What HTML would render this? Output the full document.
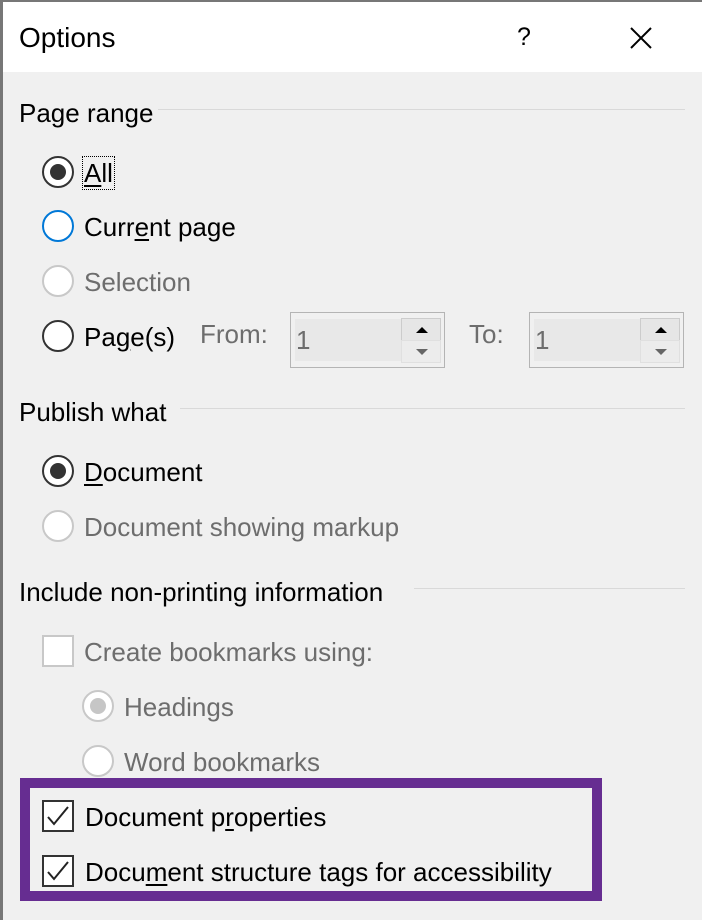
<!DOCTYPE html>
<html><head><style>
*{margin:0;padding:0;box-sizing:border-box}
body{width:702px;height:920px;background:#f0f0f0;font-family:"Liberation Sans",sans-serif;position:relative;overflow:hidden;color:#000}
.t{position:absolute;font-size:26px;line-height:30px;white-space:nowrap;transform-origin:left center}
.g{color:#6d6d6d}
.r{position:absolute;width:32px;height:32px;border-radius:50%;border:2px solid #333;background:#fff}
.rd{border-color:#c8c8c8}
.cb{position:absolute;width:32px;height:32px;border:2px solid #333;background:#fff}
.line{position:absolute;height:1px;background:#d9d9d9}
.spin{position:absolute;width:155px;height:56px;border:1px solid #b4b4b4;background:#f0f0f0}
.spin .in{position:absolute;left:4px;top:6px;width:106px;height:42px;background:#e8e8e8}
.spin .up,.spin .dn{position:absolute;left:110px;width:40px;height:23px;border:1px solid #ccc;background:#e6e6e6}
.spin .up{top:5px}.spin .dn{top:27px;background:#ececec;border-color:#e0e0e0}
u{text-decoration:underline;text-underline-offset:3px}
</style></head><body>
<div style="position:absolute;left:0;top:0;width:702px;height:72px;background:#fff"></div>
<div style="position:absolute;left:0;top:0;width:3px;height:920px;background:#777"></div>
<div style="position:absolute;left:0;top:0;width:702px;height:2px;background:#777"></div>
<div class="t" style="left:19px;top:23px;font-size:28px">Options</div>
<div class="t" style="left:517px;top:22px;font-size:25px">?</div>
<svg style="position:absolute;left:630px;top:27px" width="22" height="22"><path d="M1 1L21 21M21 1L1 21" stroke="#000" stroke-width="2"/></svg>

<div class="t" style="left:19px;top:98px">Page range</div>
<div class="line" style="left:158px;top:109px;width:527px"></div>
<div class="r" style="left:42px;top:156px"><div style="position:absolute;left:6px;top:6px;width:16px;height:16px;border-radius:50%;background:#333"></div></div>
<div class="t" style="left:84px;top:158px"><span style="outline:1px dotted #000;outline-offset:1px"><u>A</u>ll</span></div>
<div class="r" style="left:42px;top:210px;border-color:#0078d7"></div>
<div class="t" style="left:84px;top:212px">Curr<u>e</u>nt page</div>
<div class="r rd" style="left:42px;top:265px"></div>
<div class="t g" style="left:84px;top:267px">Selection</div>
<div class="r" style="left:42px;top:320px"></div>
<div class="t" style="left:84px;top:322px">Pa<u>g</u>e(s)</div>
<div class="t g" style="left:200px;top:319px">From:</div>
<div class="spin" style="left:290px;top:312px"><div class="in"></div><div class="t g" style="left:5px;top:12px">1</div><div class="up"><svg width="40" height="22"><path d="M14 14L20 8L26 14Z" fill="#000"/></svg></div><div class="dn"><svg width="40" height="22"><path d="M14 8L20 14L26 8Z" fill="#666"/></svg></div></div>
<div class="t g" style="left:469px;top:319px">To:</div>
<div class="spin" style="left:529px;top:312px"><div class="in"></div><div class="t g" style="left:5px;top:12px">1</div><div class="up"><svg width="40" height="22"><path d="M14 14L20 8L26 14Z" fill="#000"/></svg></div><div class="dn"><svg width="40" height="22"><path d="M14 8L20 14L26 8Z" fill="#666"/></svg></div></div>

<div class="t" style="left:19px;top:397px">Publish what</div>
<div class="line" style="left:180px;top:408px;width:505px"></div>
<div class="r" style="left:42px;top:455px"><div style="position:absolute;left:6px;top:6px;width:16px;height:16px;border-radius:50%;background:#333"></div></div>
<div class="t" style="left:84px;top:457px"><u>D</u>ocument</div>
<div class="r rd" style="left:42px;top:510px"></div>
<div class="t g" style="left:84px;top:512px">Document showing markup</div>

<div class="t" style="left:19px;top:577px">Include non-printing information</div>
<div class="line" style="left:414px;top:588px;width:271px"></div>
<div class="cb" style="left:42px;top:635px;border-color:#c8c8c8"></div>
<div class="t g" style="left:84px;top:637px">Create bookmarks using:</div>
<div class="r rd" style="left:82px;top:690px"><div style="position:absolute;left:6px;top:6px;width:16px;height:16px;border-radius:50%;background:#c6c6c6"></div></div>
<div class="t g" style="left:124px;top:692px">Headings</div>
<div class="r rd" style="left:82px;top:745px"></div>
<div class="t g" style="left:124px;top:747px">Word bookmarks</div>

<div style="position:absolute;left:20px;top:778px;width:582px;height:123px;border:10px solid #662d91"></div>
<div class="cb" style="left:42px;top:800px"><svg width="28" height="28" style="position:absolute;left:0;top:0"><path d="M4 15L10 22L24 5" stroke="#222" stroke-width="2" fill="none"/></svg></div>
<div class="t" style="left:85px;top:802px">Document p<u>r</u>operties</div>
<div class="cb" style="left:42px;top:855px"><svg width="28" height="28" style="position:absolute;left:0;top:0"><path d="M4 15L10 22L24 5" stroke="#222" stroke-width="2" fill="none"/></svg></div>
<div class="t" style="left:85px;top:857px">Docu<u>m</u>ent structure tags for accessibility</div>
</body></html>
